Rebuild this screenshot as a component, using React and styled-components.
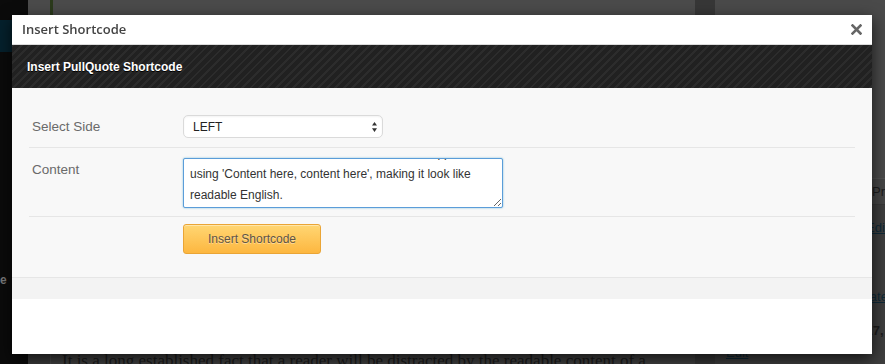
import React, { useEffect, useRef } from 'react';
import styled, { createGlobalStyle } from 'styled-components';

const GlobalStyle = createGlobalStyle`
  html, body {
    margin: 0;
    padding: 0;
  }
  body {
    width: 885px;
    height: 364px;
    overflow: hidden;
    background: #484848;
  }
  * {
    box-sizing: border-box;
  }
`;

const QUOTE_TEXT =
  'It is a long established fact that a reader will be distracted by the readable content of a page when looking at its layout. The point of using Lorem Ipsum is that it has a more-or-less normal distribution of letters, as opposed to\nusing \'Content here, content here\', making it look like readable English.';

// page behind the dialog
const Page = styled.div`
  display: flex;
  height: 364px;
  overflow: hidden;
`;

const Sidebar = styled.div`
  width: 28px;
  flex: none;
  background: #0b0b0b;
  display: flex;
  flex-direction: column;
`;

const SideBlock = styled.div`
  margin-top: 20px;
  width: 12px;
  height: 32px;
  background: #05212d;
`;

const SideLabel = styled.span`
  margin-top: 222px;
  font: bold 12px/12px 'Liberation Sans', Arial, sans-serif;
  color: #7a7a7a;
`;

const Gutter = styled.div`
  width: 22px;
  flex: none;
  background: linear-gradient(#4b4b4b 0 180px, #3b3b3b 180px);
`;

const Article = styled.div`
  flex: 1;
  display: flex;
  flex-direction: column;
`;

const TopBand = styled.div`
  height: 15px;
  flex: none;
  background: #4b4b4b;
  border-left: 3px solid #2b3a1c;
`;

const ArticleBody = styled.div`
  flex: 1;
  display: flex;
  flex-direction: column;
  justify-content: flex-end;
  background: #414141;
  border-left: 1px solid #4a4a4a;
  padding-left: 11px;
  overflow: hidden;
`;

const Paragraph = styled.p`
  margin: 0 0 -8px;
  white-space: nowrap;
  font: 17px/22px 'Liberation Serif', 'Times New Roman', serif;
  color: #1b1b1b;
`;

const Aside = styled.div`
  width: 190px;
  flex: none;
  display: flex;
  flex-direction: column;
  border-left: 20px solid #373737;
  background: linear-gradient(#4a4a4a 0 178px, #3e3e3e 178px);
  font-family: 'Liberation Sans', Arial, sans-serif;
  font-size: 13px;
`;

const AsideBar = styled.div`
  margin-top: 178px;
  height: 27px;
  display: flex;
  align-items: center;
  padding-left: 157px;
  background: #464646;
  border-top: 1px solid #525252;
  border-bottom: 1px solid #393939;
  color: #1c1c1c;
`;

const AsideLink = styled.a`
  margin-top: ${(p) => p.$top}px;
  padding-left: ${(p) => p.$indent}px;
  line-height: 16px;
  color: ${(p) => (p.$plain ? '#1c1c1c' : '#0f2a38')};
  font-weight: ${(p) => (p.$plain ? 'bold' : 'normal')};
  text-decoration: ${(p) => (p.$plain ? 'none' : 'underline')};
  white-space: nowrap;
`;

// dialog
const Modal = styled.div`
  position: fixed;
  left: 12px;
  top: 15px;
  width: 860px;
  height: 339px;
  display: flex;
  flex-direction: column;
  background: #fff;
  box-shadow: 0 5px 15px rgba(0, 0, 0, 0.7);
  font-family: 'Liberation Sans', Arial, sans-serif;
`;

const TitleBar = styled.div`
  height: 30px;
  flex: none;
  display: flex;
  align-items: center;
  justify-content: space-between;
  padding: 0 10px;
  border-bottom: 1px solid #dcdcdc;
`;

const Title = styled.h1`
  margin: 0;
  font: 600 13px/1 'Open Sans', sans-serif;
  color: #444;
`;

const CloseButton = styled.button`
  border: 0;
  padding: 0;
  background: none;
  width: 11px;
  height: 11px;
  display: flex;
  cursor: pointer;
`;

const Header = styled.div`
  height: 43px;
  flex: none;
  display: flex;
  align-items: center;
  padding-left: 15px;
  background-color: #222;
  background-image: repeating-linear-gradient(
    135deg,
    #2c2c2c 0 2px,
    #212121 2px 6px
  );
`;

const HeaderTitle = styled.h2`
  margin: 0;
  font: bold 12px/1 'Liberation Sans', Arial, sans-serif;
  color: #fff;
  text-shadow: 0 1px 0 #000;
`;

const Body = styled.div`
  flex: none;
  padding: 17px 17px 23px;
  background: #f8f8f8;
`;

const Row = styled.div`
  display: grid;
  grid-template-columns: 154px 1fr;
  align-items: start;
  padding: ${(p) => p.$pad};
  border-bottom: ${(p) => (p.$last ? 'none' : '1px solid #e6e6e6')};
`;

const Label = styled.label`
  padding-left: 3px;
  font-size: 13.5px;
  line-height: 23px;
  color: #6a6a6a;
`;

const SelectWrap = styled.div`
  position: relative;
  width: 200px;
`;

const Select = styled.select`
  appearance: none;
  display: block;
  width: 200px;
  height: 23px;
  margin: 0;
  padding: 0 9px;
  border: 1px solid #dadada;
  border-radius: 5px;
  background: #fff;
  box-shadow: inset 0 1px 2px rgba(0, 0, 0, 0.05);
  font: 12px 'Liberation Sans', Arial, sans-serif;
  color: #222;
  outline: none;
`;

const SelectArrows = styled.svg`
  position: absolute;
  right: 6px;
  top: 7px;
  pointer-events: none;
`;

const TextArea = styled.textarea`
  display: block;
  width: 320px;
  height: 50px;
  margin: 0;
  padding: 3px 6px 1px;
  border: 1px solid #5b9dd9;
  border-radius: 2px;
  box-shadow: 0 0 2px rgba(30, 140, 190, 0.6);
  font: 12px/21px 'Liberation Sans', Arial, sans-serif;
  color: #333;
  background: #fff;
  overflow: hidden;
  resize: both;
  outline: none;
`;

const InsertButton = styled.button`
  width: 138px;
  height: 30px;
  padding: 0;
  border: 1px solid #eaa536;
  border-radius: 3px;
  background: linear-gradient(#ffd673, #fdb740);
  box-shadow: inset 0 1px 0 rgba(255, 255, 255, 0.4);
  font: 12px 'Liberation Sans', Arial, sans-serif;
  color: #5e5446;
  text-shadow: 0 1px 0 rgba(255, 255, 255, 0.4);
  cursor: pointer;
`;

const Footer = styled.div`
  height: 22px;
  flex: none;
  background: #f3f3f3;
  border-top: 1px solid #e6e6e6;
`;

const Filler = styled.div`
  flex: 1;
  background: #fff;
`;

const App = () => {
  const textRef = useRef(null);

  useEffect(() => {
    const el = textRef.current;
    if (el) el.scrollTop = el.scrollHeight;
  }, []);

  return (
    <>
      <GlobalStyle />
      <Page>
        <Sidebar>
          <SideBlock />
          <SideLabel>e</SideLabel>
        </Sidebar>
        <Gutter />
        <Article>
          <TopBand />
          <ArticleBody>
            <Paragraph>
              It is a long established fact that a reader will be distracted by the readable content of a
            </Paragraph>
          </ArticleBody>
        </Article>
        <Aside>
          <AsideBar>Preview</AsideBar>
          <AsideLink $top={15} $indent={151}>Edit</AsideLink>
          <AsideLink $top={53} $indent={131}>Update</AsideLink>
          <AsideLink $top={18} $indent={136} $plain>2017,</AsideLink>
          <AsideLink $top={6} $indent={11}>Edit</AsideLink>
        </Aside>
      </Page>

      <Modal>
        <TitleBar>
          <Title>Insert Shortcode</Title>
          <CloseButton aria-label="Close">
            <svg width="11" height="11" viewBox="0 0 11 11">
              <path d="M1.5 1.5 L9.5 9.5 M9.5 1.5 L1.5 9.5" stroke="#666" strokeWidth="2.6" strokeLinecap="square" />
            </svg>
          </CloseButton>
        </TitleBar>
        <Header>
          <HeaderTitle>Insert PullQuote Shortcode</HeaderTitle>
        </Header>
        <Body>
          <Row $pad="10px 0 9px">
            <Label>Select Side</Label>
            <SelectWrap>
              <Select defaultValue="left">
                <option value="left">LEFT</option>
                <option value="right">RIGHT</option>
              </Select>
              <SelectArrows width="5" height="10" viewBox="0 0 5 10">
                <path d="M2.5 0 L5 3.6 L0 3.6 Z M0 6.2 L5 6.2 L2.5 10 Z" fill="#333" />
              </SelectArrows>
            </SelectWrap>
          </Row>
          <Row $pad="10px 0 8px">
            <Label>Content</Label>
            <TextArea ref={textRef} defaultValue={QUOTE_TEXT} />
          </Row>
          <Row $pad="7px 0 0" $last>
            <span />
            <InsertButton>Insert Shortcode</InsertButton>
          </Row>
        </Body>
        <Footer />
        <Filler />
      </Modal>
    </>
  );
};

export default App;
